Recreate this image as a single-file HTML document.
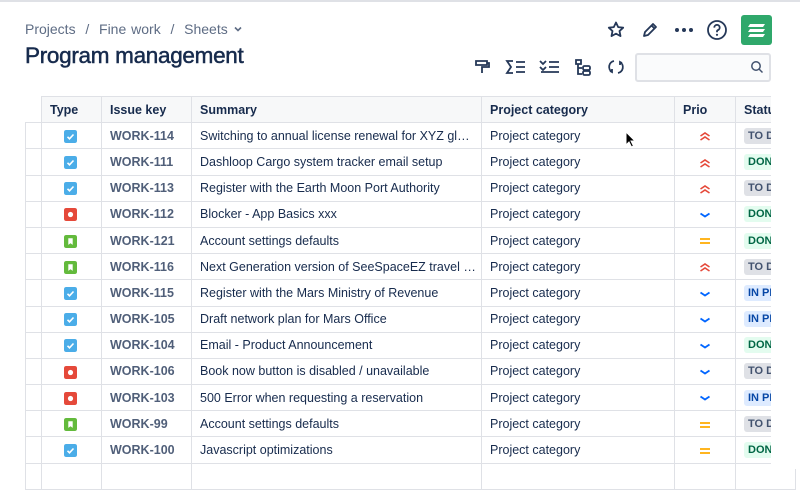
<!DOCTYPE html>
<html><head><meta charset="utf-8"><style>
*{box-sizing:border-box;margin:0;padding:0}
body{width:800px;height:469px;overflow:hidden;background:#fff;font-family:"Liberation Sans",sans-serif;color:#172b4d;position:relative}
.top{position:absolute;left:0;top:0;width:800px;height:2px;background:#dfe1e6}
.bc{position:absolute;left:25px;top:21px;font-size:14px;color:#5e6c84;word-spacing:1px}
h1{position:absolute;left:25px;top:43px;font-size:22.5px;font-weight:400;letter-spacing:-0.3px;color:#172b4d;-webkit-text-stroke:0.5px #172b4d}
.ic{position:absolute}
table{position:absolute;left:25px;top:96px;border-collapse:collapse;font-size:12.5px;table-layout:fixed;width:770px}
td,th{height:26.2px;border:1px solid #dfe1e6;padding:0 8px;white-space:nowrap;overflow:hidden;text-align:left}
th{font-weight:700;font-size:12.5px;background:#f7f8f9}
td.g{background:#fff;padding:0}
th.g{border:none;border-bottom:1px solid #dfe1e6;background:#fff;padding:0}
.k{color:#505f79;font-weight:700}
.t{width:13px;height:13px;border-radius:2px;display:inline-block;vertical-align:middle;margin-left:14px}
.st{display:inline-block;font-size:11px;font-weight:700;padding:2px 4px;border-radius:3px}
.todo{background:#dfe1e6;color:#42526e}.done{background:#e3fcef;color:#006644}.prog{background:#deebff;color:#0747a6}
.p{text-align:center}
.p svg{vertical-align:middle}
.fade{position:absolute;left:771px;top:90px;width:29px;height:379px;background:#fff}
</style></head><body>
<svg width="0" height="0" style="position:absolute"><defs>
<symbol id="task" viewBox="0 0 13 13"><rect width="13" height="13" rx="2" fill="#4bade8"/><path d="M3.5 6.8l2 2 4-4.3" stroke="#fff" stroke-width="1.6" fill="none"/></symbol>
<symbol id="bug" viewBox="0 0 13 13"><rect width="13" height="13" rx="2" fill="#e5493a"/><circle cx="6.5" cy="6.5" r="2.6" fill="#fff"/></symbol>
<symbol id="story" viewBox="0 0 13 13"><rect width="13" height="13" rx="2" fill="#63ba3c"/><path d="M4.3 3.3h4.4v6.6L6.5 8.2 4.3 9.9z" fill="#fff"/></symbol>
<symbol id="hi" viewBox="0 0 12 10"><path d="M1.5 5l4.5-3 4.5 3M1.5 9l4.5-3 4.5 3" stroke="#e5493a" stroke-width="1.6" fill="none"/></symbol>
<symbol id="lo" viewBox="0 0 12 10"><path d="M1.5 3.5l4.5 3 4.5-3" stroke="#0065ff" stroke-width="1.8" fill="none"/></symbol>
<symbol id="md" viewBox="0 0 12 10"><path d="M1 3h10M1 7h10" stroke="#ffab00" stroke-width="1.7"/></symbol>
</defs></svg>
<div class="top"></div>
<div class="bc">Projects &nbsp;/&nbsp; Fine work &nbsp;/&nbsp; Sheets <svg width="10" height="10" viewBox="0 0 10 10"><path d="M2 3.5l3 3 3-3" stroke="#5e6c84" stroke-width="1.6" fill="none"/></svg></div>
<h1>Program management</h1>
<svg class="ic" style="left:606px;top:20px" width="20" height="20" viewBox="0 0 20 20"><path d="M10 2.5l2.2 4.6 5 .6-3.7 3.4 1 5-4.5-2.5-4.5 2.5 1-5L2.8 7.7l5-.6z" fill="none" stroke="#253858" stroke-width="1.8" stroke-linejoin="round"/></svg>
<svg class="ic" style="left:640px;top:20px" width="20" height="20" viewBox="0 0 20 20"><path d="M4 16l1-4 8-8 3 3-8 8zM11.5 5.5l3 3" fill="none" stroke="#253858" stroke-width="1.8" stroke-linejoin="round"/></svg>
<svg class="ic" style="left:673px;top:20px" width="22" height="20"><circle cx="4" cy="10" r="2" fill="#253858"/><circle cx="11" cy="10" r="2" fill="#253858"/><circle cx="18" cy="10" r="2" fill="#253858"/></svg>
<svg class="ic" style="left:706px;top:19px" width="22" height="22" viewBox="0 0 22 22"><circle cx="11" cy="11" r="9" fill="none" stroke="#253858" stroke-width="1.8"/><path d="M8.3 8.6a2.7 2.7 0 1 1 3.6 2.5c-.7.3-.9.8-.9 1.5v.6" fill="none" stroke="#253858" stroke-width="1.8"/><circle cx="11" cy="15.8" r="1.1" fill="#253858"/></svg>
<div class="ic" style="left:741px;top:15px;width:31px;height:30px;background:#2fa86b;border-radius:3px"></div>
<svg class="ic" style="left:741px;top:15px" width="31" height="30"><path d="M9 9h15l-2 3H7zM9 14h15l-2 3H7zM9 19h15l-2 3H7z" fill="#fff"/></svg>
<svg class="ic" style="left:474px;top:58px" width="18" height="18" viewBox="0 0 18 18"><path d="M2 3h11v4H2zM13 5h2v4H8v6" fill="none" stroke="#253858" stroke-width="1.8"/></svg>
<svg class="ic" style="left:505px;top:58px" width="22" height="18" viewBox="0 0 22 18"><path d="M8 3H2l4 6-4 6h6M11 4h9M11 9h9M11 14h9" fill="none" stroke="#253858" stroke-width="1.8"/></svg>
<svg class="ic" style="left:539px;top:58px" width="22" height="18" viewBox="0 0 22 18"><path d="M1 3l3 3 3-3M1 9l3 3 3-3M10 4h10M10 9h10M2 14h18" fill="none" stroke="#253858" stroke-width="1.8"/></svg>
<svg class="ic" style="left:574px;top:58px" width="18" height="18" viewBox="0 0 18 18"><path d="M2 2h5v4H2zM4 6v10h4M4 10h4" fill="none" stroke="#253858" stroke-width="1.8"/><rect x="9" y="8" width="7" height="4" rx="1.5" fill="none" stroke="#253858" stroke-width="1.8"/><rect x="9" y="13" width="7" height="4" rx="1.5" fill="none" stroke="#253858" stroke-width="1.8"/></svg>
<svg class="ic" style="left:607px;top:58px" width="18" height="18" viewBox="0 0 18 18"><path d="M7 3a6 6 0 0 0-2 11M11 15a6 6 0 0 0 2-11M3 13l2 1 0-3M15 5l-2-1 0 3" fill="none" stroke="#253858" stroke-width="1.8"/></svg>
<div class="ic" style="left:635px;top:53px;width:136px;height:29px;border:2px solid #dfe1e6;border-radius:3px;background:#fafbfc"></div>
<svg class="ic" style="left:750px;top:60px" width="14" height="14"><circle cx="6" cy="6" r="4.2" fill="none" stroke="#42526e" stroke-width="1.5"/><path d="M9 9l3.5 3.5" stroke="#42526e" stroke-width="1.5"/></svg>
<table>
<colgroup><col style="width:16px"><col style="width:60px"><col style="width:90px"><col style="width:290px"><col style="width:193px"><col style="width:61px"><col style="width:60px"></colgroup>
<tr><th class="g"></th><th>Type</th><th>Issue key</th><th>Summary</th><th>Project category</th><th>Prio</th><th>Status</th></tr>
<tr><td class="g"></td><td><svg class="t"><use href="#task"/></svg></td><td class="k">WORK-114</td><td>Switching to annual license renewal for XYZ gl…</td><td>Project category</td><td class="p"><svg width="12" height="10"><use href="#hi"/></svg></td><td><span class="st todo">TO DO</span></td></tr>
<tr><td class="g"></td><td><svg class="t"><use href="#task"/></svg></td><td class="k">WORK-111</td><td>Dashloop Cargo system tracker email setup</td><td>Project category</td><td class="p"><svg width="12" height="10"><use href="#hi"/></svg></td><td><span class="st done">DONE</span></td></tr>
<tr><td class="g"></td><td><svg class="t"><use href="#task"/></svg></td><td class="k">WORK-113</td><td>Register with the Earth Moon Port Authority</td><td>Project category</td><td class="p"><svg width="12" height="10"><use href="#hi"/></svg></td><td><span class="st todo">TO DO</span></td></tr>
<tr><td class="g"></td><td><svg class="t"><use href="#bug"/></svg></td><td class="k">WORK-112</td><td>Blocker - App Basics xxx</td><td>Project category</td><td class="p"><svg width="12" height="10"><use href="#lo"/></svg></td><td><span class="st done">DONE</span></td></tr>
<tr><td class="g"></td><td><svg class="t"><use href="#story"/></svg></td><td class="k">WORK-121</td><td>Account settings defaults</td><td>Project category</td><td class="p"><svg width="12" height="10"><use href="#md"/></svg></td><td><span class="st done">DONE</span></td></tr>
<tr><td class="g"></td><td><svg class="t"><use href="#story"/></svg></td><td class="k">WORK-116</td><td>Next Generation version of SeeSpaceEZ travel …</td><td>Project category</td><td class="p"><svg width="12" height="10"><use href="#hi"/></svg></td><td><span class="st todo">TO DO</span></td></tr>
<tr><td class="g"></td><td><svg class="t"><use href="#task"/></svg></td><td class="k">WORK-115</td><td>Register with the Mars Ministry of Revenue</td><td>Project category</td><td class="p"><svg width="12" height="10"><use href="#lo"/></svg></td><td><span class="st prog">IN PROG</span></td></tr>
<tr><td class="g"></td><td><svg class="t"><use href="#task"/></svg></td><td class="k">WORK-105</td><td>Draft network plan for Mars Office</td><td>Project category</td><td class="p"><svg width="12" height="10"><use href="#lo"/></svg></td><td><span class="st prog">IN PROG</span></td></tr>
<tr><td class="g"></td><td><svg class="t"><use href="#task"/></svg></td><td class="k">WORK-104</td><td>Email - Product Announcement</td><td>Project category</td><td class="p"><svg width="12" height="10"><use href="#lo"/></svg></td><td><span class="st done">DONE</span></td></tr>
<tr><td class="g"></td><td><svg class="t"><use href="#bug"/></svg></td><td class="k">WORK-106</td><td>Book now button is disabled / unavailable</td><td>Project category</td><td class="p"><svg width="12" height="10"><use href="#lo"/></svg></td><td><span class="st todo">TO DO</span></td></tr>
<tr><td class="g"></td><td><svg class="t"><use href="#bug"/></svg></td><td class="k">WORK-103</td><td>500 Error when requesting a reservation</td><td>Project category</td><td class="p"><svg width="12" height="10"><use href="#lo"/></svg></td><td><span class="st prog">IN PROG</span></td></tr>
<tr><td class="g"></td><td><svg class="t"><use href="#story"/></svg></td><td class="k">WORK-99</td><td>Account settings defaults</td><td>Project category</td><td class="p"><svg width="12" height="10"><use href="#md"/></svg></td><td><span class="st todo">TO DO</span></td></tr>
<tr><td class="g"></td><td><svg class="t"><use href="#task"/></svg></td><td class="k">WORK-100</td><td>Javascript optimizations</td><td>Project category</td><td class="p"><svg width="12" height="10"><use href="#md"/></svg></td><td><span class="st done">DONE</span></td></tr>
<tr><td class="g"></td><td></td><td></td><td></td><td></td><td></td><td></td></tr>
</table>
<div class="fade"></div>
<svg class="ic" style="left:625px;top:131px" width="12" height="18"><path d="M1 1v13l3-3 2.5 5 2-1-2.5-5h4z" fill="#000" stroke="#fff" stroke-width="1"/></svg>
</body></html>
